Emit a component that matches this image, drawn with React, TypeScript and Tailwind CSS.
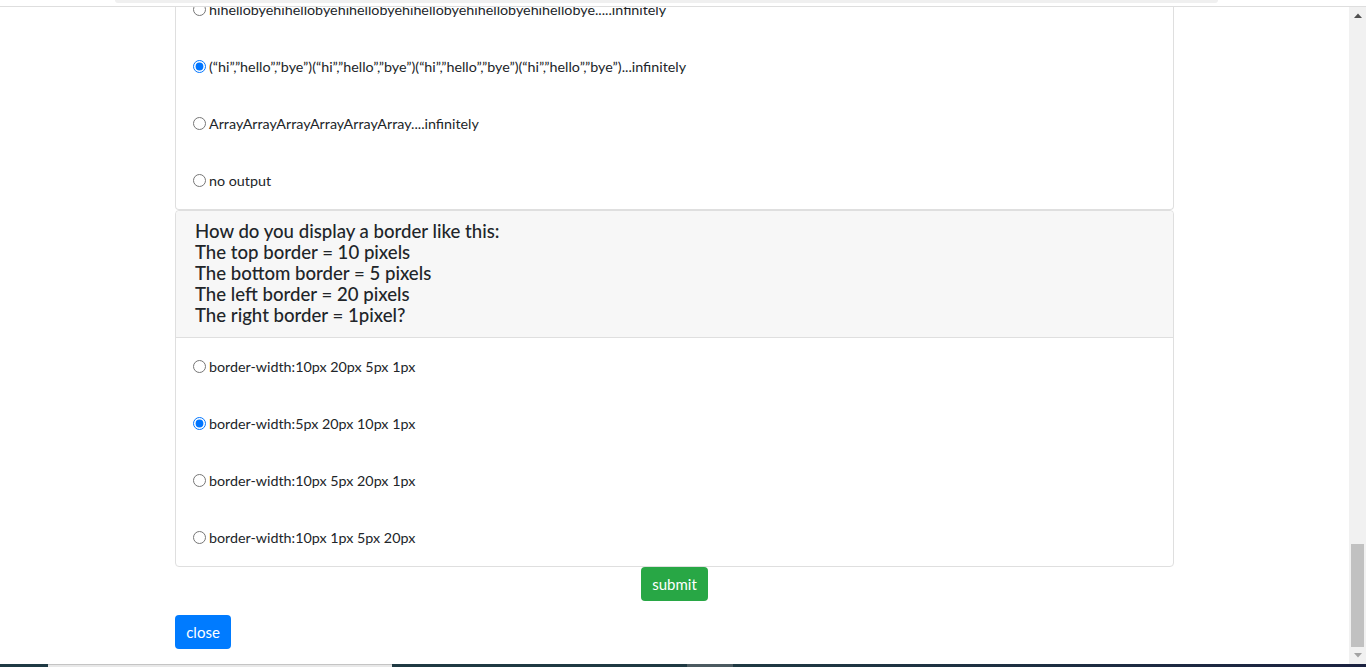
import React from "react";

const font = { fontFamily: "Lato, 'Liberation Sans', sans-serif" };

function Option({ label, checked }: { label: string; checked?: boolean }) {
  return (
    <div className="flex items-center h-[21px] leading-[21px] text-[14.3px] text-[#212529]">
      <input
        type="radio"
        readOnly
        checked={!!checked}
        className="m-0 w-[13px] h-[13px] shrink-0"
      />
      <span className="ml-[3px] whitespace-nowrap">{label}</span>
    </div>
  );
}

function ScrollArrow({ up, color }: { up?: boolean; color: string }) {
  return (
    <div className="h-[17px] w-[17px] flex items-center justify-center">
      <svg width="8" height="5" viewBox="0 0 8 5">
        {up ? (
          <polygon points="0,5 8,5 4,0.5" fill={color} />
        ) : (
          <polygon points="0,0 8,0 4,4.5" fill={color} />
        )}
      </svg>
    </div>
  );
}

export default function App() {
  const q1 = [
    { label: "hihellobyehihellobyehihellobyehihellobyehihellobyehihellobye.....infinitely" },
    {
      label:
        "(\u201chi\u201d,\u201dhello\u201d,\u201dbye\u201d)(\u201chi\u201d,\u201dhello\u201d,\u201dbye\u201d)(\u201chi\u201d,\u201dhello\u201d,\u201dbye\u201d)(\u201chi\u201d,\u201dhello\u201d,\u201dbye\u201d)...infinitely",
      checked: true,
    },
    { label: "ArrayArrayArrayArrayArrayArray....infinitely" },
    { label: "no output" },
  ];
  const q2 = [
    { label: "border-width:10px 20px 5px 1px" },
    { label: "border-width:5px 20px 10px 1px", checked: true },
    { label: "border-width:10px 5px 20px 1px" },
    { label: "border-width:10px 1px 5px 20px" },
  ];

  return (
    <div
      className="w-[1366px] h-[667px] overflow-hidden flex flex-col bg-white relative"
      style={font}
    >
      {/* top strip */}
      <div className="h-[7px] shrink-0 border-b border-[#dedede] bg-white z-10">
        <div className="ml-[115px] w-[1103px] h-[3px] bg-[#f0f0f0] rounded-b-full" />
      </div>

      <div className="flex-1 flex min-h-0">
        <main className="flex-1 overflow-hidden">
          <div className="-mt-[8px] ml-[175px] w-[999px] flex flex-col">
            {/* card 1 (scrolled, header hidden) */}
            <div className="border-x border-b border-[#dfdfdf] rounded-b-[4px] pl-[17px] pb-[18px] flex flex-col gap-[36px]">
              {q1.map((o, i) => (
                <Option key={i} label={o.label} checked={o.checked} />
              ))}
            </div>

            {/* card 2 */}
            <div className="border border-[#dfdfdf] rounded-[4px] flex flex-col">
              <div className="bg-[#f7f7f7] border-b border-[#dfdfdf] rounded-t-[4px] pl-[19px] pt-[10px] pb-[11px] text-[18.6px] leading-[21px] font-medium text-[#212529]">
                <div>How do you display a border like this:</div>
                <div>The top border = 10 pixels</div>
                <div>The bottom border = 5 pixels</div>
                <div>The left border = 20 pixels</div>
                <div>The right border = 1pixel?</div>
              </div>
              <div className="pl-[17px] pt-[18px] pb-[18px] flex flex-col gap-[36px]">
                {q2.map((o, i) => (
                  <Option key={i} label={o.label} checked={o.checked} />
                ))}
              </div>
            </div>

            <div className="flex justify-center">
              <button className="w-[67px] h-[34px] rounded-[4px] bg-[#28a745] text-white text-[15px] leading-[21px]">
                submit
              </button>
            </div>

            <div className="mt-[14px]">
              <button className="w-[56px] h-[34px] rounded-[4px] bg-[#007bff] text-white text-[15px] leading-[21px]">
                close
              </button>
            </div>
          </div>
        </main>

        {/* fake scrollbar */}
        <div className="w-[17px] shrink-0 bg-[#f1f1f1] flex flex-col items-center">
          <ScrollArrow up color="#505050" />
          <div className="flex-1" />
          <div className="w-[13px] h-[103px] bg-[#c1c1c1]" />
          <ScrollArrow color="#a3a3a3" />
        </div>
      </div>

      {/* taskbar edge */}
      <div className="h-[3px] shrink-0 flex">
        <div className="w-[48px] bg-[#1f3a44]" />
        <div className="w-[344px] bg-[#e8e8e8] border-t border-[#c4c4c4]" />
        <div className="w-[295px] bg-[#1f3942]" />
        <div className="w-[46px] bg-[#4b5a60]" />
        <div className="flex-1 bg-gradient-to-r from-[#1f3942] to-[#1b2240]" />
      </div>
    </div>
  );
}
